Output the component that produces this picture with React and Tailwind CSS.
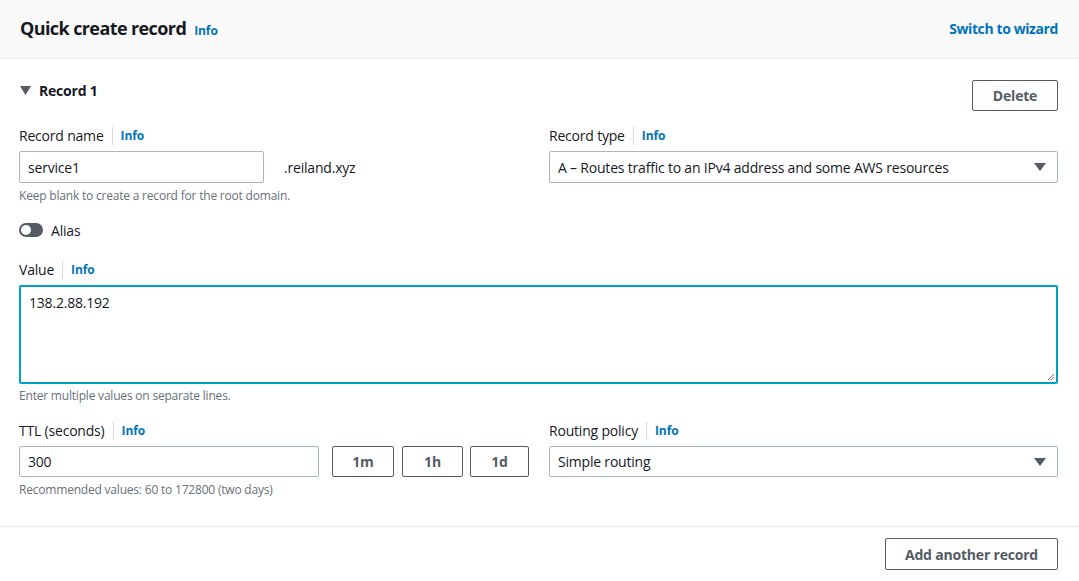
import React from "react";

const Info = () => (
  <span className="text-[12px] font-bold text-[#0073bb] tracking-[-0.1px]">Info</span>
);

const Label = ({ children }) => (
  <div className="flex items-center h-[20px] mb-[5px]">
    <span className="text-[14px] text-[#16191f] leading-[20px]">{children}</span>
    <span className="mx-[8px] w-px h-[18px] bg-[#d5dbdb]" />
    <Info />
  </div>
);

const Caret = () => (
  <svg width="14" height="10" viewBox="0 0 14 10">
    <path d="M1 1h12L7 9z" fill="#545b64" />
  </svg>
);

const Select = ({ children, h }) => (
  <div className={`${h} border border-[#aab7b8] rounded-[2px] flex items-center justify-between pl-[8px] pr-[10px] text-[14px] text-[#16191f] bg-white`}>
    <span>{children}</span>
    <Caret />
  </div>
);

export default function App() {
  return (
    <div
      className="w-[1079px] h-[581px] bg-white text-[#16191f] overflow-hidden tracking-[-0.2px]"
      style={{ fontFamily: '"Open Sans", "Noto Sans", Arial, sans-serif' }}
    >
      <div className="h-[59px] bg-[#fafafa] border-b border-[#eaeded] flex items-center justify-between pl-[20px] pr-[21px] pb-[2px]">
        <div className="flex items-baseline gap-[8px]">
          <span className="text-[18px] font-bold tracking-[-0.6px]">Quick create record</span>
          <Info />
        </div>
        <span className="text-[14px] font-bold text-[#0073bb] tracking-[-0.4px]">Switch to wizard</span>
      </div>

      <div className="pl-[19px] pr-[21px] pt-[21px]">
        <div className="flex items-start justify-between">
          <div className="flex items-center gap-[8px] pl-[1px]">
            <svg width="11" height="9" viewBox="0 0 11 9">
              <path d="M0 0h11L5.5 9z" fill="#545b64" />
            </svg>
            <span className="text-[14px] font-bold">Record 1</span>
          </div>
          <button className="w-[86px] h-[31px] border border-[#545b64] rounded-[2px] text-[14px] font-bold text-[#545b64] bg-white">
            Delete
          </button>
        </div>

        <div className="grid grid-cols-[530px_1fr] mt-[15px]">
          <div>
            <Label>Record name</Label>
            <div className="flex items-center">
              <div className="w-[245px] h-[32px] border border-[#aab7b8] rounded-[2px] flex items-center pl-[8px] text-[14px]">
                service1
              </div>
              <span className="ml-[20px] text-[14px]">.reiland.xyz</span>
            </div>
            <div className="text-[12px] text-[#687078] mt-[4px]">
              Keep blank to create a record for the root domain.
            </div>
          </div>
          <div>
            <Label>Record type</Label>
            <Select h="h-[32px]">A – Routes traffic to an IPv4 address and some AWS resources</Select>
          </div>
        </div>

        <div className="flex items-center mt-[15px] h-[20px]">
          <div className="w-[24px] h-[14px] rounded-full bg-[#545b64] relative">
            <div className="absolute left-[2px] top-[2px] w-[10px] h-[10px] rounded-full bg-white" />
          </div>
          <span className="ml-[8px] text-[14px]">Alias</span>
        </div>

        <div className="mt-[20px]">
          <Label>Value</Label>
          <div className="mt-[5px] h-[99px] border-2 border-[#00a1c9] rounded-[2px] relative pl-[8px] pt-[5px] text-[14px]">
            138.2.88.192
            <svg className="absolute right-[1px] bottom-[1px]" width="8" height="8" viewBox="0 0 8 8">
              <path d="M7 1L1 7M7 4L4 7" stroke="#777" strokeWidth="1" />
            </svg>
          </div>
          <div className="text-[12px] text-[#687078] mt-[3px]">
            Enter multiple values on separate lines.
          </div>
        </div>

        <div className="grid grid-cols-[530px_1fr] mt-[16px]">
          <div>
            <Label>TTL (seconds)</Label>
            <div className="flex items-center">
              <div className="w-[300px] h-[31px] border border-[#aab7b8] rounded-[2px] flex items-center pl-[8px] text-[14px]">
                300
              </div>
              <button className="ml-[13px] w-[62px] h-[31px] border border-[#545b64] rounded-[2px] text-[14px] font-bold text-[#545b64]">1m</button>
              <button className="ml-[8px] w-[61px] h-[31px] border border-[#545b64] rounded-[2px] text-[14px] font-bold text-[#545b64]">1h</button>
              <button className="ml-[7px] w-[59px] h-[31px] border border-[#545b64] rounded-[2px] text-[14px] font-bold text-[#545b64]">1d</button>
            </div>
            <div className="text-[12px] text-[#687078] mt-[4px]">
              Recommended values: 60 to 172800 (two days)
            </div>
          </div>
          <div>
            <Label>Routing policy</Label>
            <Select h="h-[31px]">Simple routing</Select>
          </div>
        </div>
      </div>

      <div className="mt-[27px] border-t border-[#eaeded] flex justify-end pr-[21px] pt-[11px]">
        <button className="w-[173px] h-[32px] border border-[#545b64] rounded-[2px] text-[14px] font-bold text-[#545b64] bg-white">
          Add another record
        </button>
      </div>
    </div>
  );
}
